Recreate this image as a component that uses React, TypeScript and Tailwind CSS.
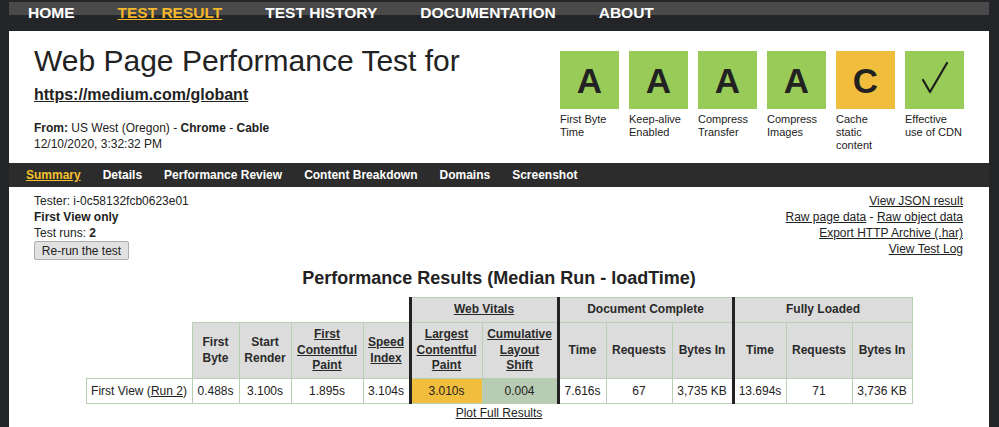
import React from "react";

const TOP_NAV = ["HOME", "TEST RESULT", "TEST HISTORY", "DOCUMENTATION", "ABOUT"];
const SUB_NAV = ["Summary", "Details", "Performance Review", "Content Breakdown", "Domains", "Screenshot"];

const GRADES = [
  { grade: "A", label: ["First Byte", "Time"], color: "bg-[#99cb59]" },
  { grade: "A", label: ["Keep-alive", "Enabled"], color: "bg-[#99cb59]" },
  { grade: "A", label: ["Compress", "Transfer"], color: "bg-[#99cb59]" },
  { grade: "A", label: ["Compress", "Images"], color: "bg-[#99cb59]" },
  { grade: "C", label: ["Cache", "static", "content"], color: "bg-[#f1bd3c]" },
  { grade: "check", label: ["Effective", "use of CDN"], color: "bg-[#99cb59]" },
];

function CheckMark() {
  return (
    <svg width="59" height="58" viewBox="0 0 59 58">
      <path d="M18 29 L25 41 L42 12" fill="none" stroke="#1e1e1e" strokeWidth="2.2" strokeLinecap="round" strokeLinejoin="round" />
    </svg>
  );
}

function GradeBox({ grade, label, color }: { grade: string; label: string[]; color: string }) {
  return (
    <div className="w-[59px]">
      <div className={`flex h-[58px] w-[59px] items-center justify-center ${color}`}>
        {grade === "check" ? (
          <CheckMark />
        ) : (
          <span className="text-[35px] font-bold leading-none text-[#222]">{grade}</span>
        )}
      </div>
      <div className="mt-[4px] text-[11px] leading-[13px] text-[#222]">
        {label.map((l) => (
          <div key={l}>{l}</div>
        ))}
      </div>
    </div>
  );
}

const th = "border border-[#b9cfb4] bg-[#dcdcdc] px-[3px] py-0 text-center text-[12px] font-bold leading-[15.5px] text-[#2a2a2a]";
const td = "border border-[#b9cfb4] px-[3px] py-0 text-center text-[12px] font-normal leading-[14px] text-[#222]";
const thick = "border-l-[3px] border-l-[#222]";

function ResultsTable() {
  return (
    <table className="mx-auto mt-[8px] table-fixed border-collapse">
      <colgroup>
        <col className="w-[106px]" />
        <col className="w-[47px]" />
        <col className="w-[52px]" />
        <col className="w-[72px]" />
        <col className="w-[47px]" />
        <col className="w-[72px]" />
        <col className="w-[76px]" />
        <col className="w-[48px]" />
        <col className="w-[66px]" />
        <col className="w-[61px]" />
        <col className="w-[53px]" />
        <col className="w-[66px]" />
        <col className="w-[60px]" />
      </colgroup>
      <thead>
        <tr className="h-[25px]">
          <th colSpan={5} className="border-0 p-0"></th>
          <th colSpan={2} className={`${th} ${thick}`}>
            <span className="underline">Web Vitals</span>
          </th>
          <th colSpan={3} className={`${th} ${thick}`}>Document Complete</th>
          <th colSpan={3} className={`${th} ${thick}`}>Fully Loaded</th>
        </tr>
        <tr className="h-[56px]">
          <th className="border-0 p-0"></th>
          <th className={th}>First<br />Byte</th>
          <th className={th}>Start<br />Render</th>
          <th className={th}>
            <span className="underline">First<br />Contentful<br />Paint</span>
          </th>
          <th className={th}>
            <span className="underline">Speed<br />Index</span>
          </th>
          <th className={`${th} ${thick}`}>
            <span className="underline">Largest<br />Contentful<br />Paint</span>
          </th>
          <th className={th}>
            <span className="underline">Cumulative<br />Layout<br />Shift</span>
          </th>
          <th className={`${th} ${thick}`}>Time</th>
          <th className={th}>Requests</th>
          <th className={th}>Bytes In</th>
          <th className={`${th} ${thick}`}>Time</th>
          <th className={th}>Requests</th>
          <th className={th}>Bytes In</th>
        </tr>
      </thead>
      <tbody>
        <tr className="h-[25px]">
          <td className={td}>
            First View (<span className="underline">Run 2</span>)
          </td>
          <td className={td}>0.488s</td>
          <td className={td}>3.100s</td>
          <td className={td}>1.895s</td>
          <td className={td}>3.104s</td>
          <td className={`${td} ${thick} bg-[#f1bd3c]`}>3.010s</td>
          <td className={`${td} bg-[#b8cbb3]`}>0.004</td>
          <td className={`${td} ${thick}`}>7.616s</td>
          <td className={td}>67</td>
          <td className={td}>3,735 KB</td>
          <td className={`${td} ${thick}`}>13.694s</td>
          <td className={td}>71</td>
          <td className={td}>3,736 KB</td>
        </tr>
      </tbody>
    </table>
  );
}

export default function App() {
  return (
    <div className="min-h-[427px] bg-[#232529] pl-[9px] pr-[10px] font-['Liberation_Sans',Arial,sans-serif] text-[#222]">
      {/* top navigation */}
      <div className="h-[31px] pt-[2px]">
        <div className="flex h-[29px] gap-[43px] bg-[linear-gradient(to_bottom,#4a4a4a_13px,transparent_13px)] pl-[19px] pt-[2px] text-[15.5px] font-bold leading-[18px] text-white">
          {TOP_NAV.map((item) => (
            <span
              key={item}
              className={item === "TEST RESULT" ? "text-[#f3b72b] underline decoration-[#f3b72b]" : ""}
            >
              {item}
            </span>
          ))}
        </div>
      </div>

      <div className="min-h-[396px] bg-white">
        {/* header */}
        <div className="flex justify-between px-[25px] pb-[11px] pt-[13px]">
          <div>
            <h1 className="text-[30px] font-normal leading-[34px] text-[#222]">Web Page Performance Test for</h1>
            <div className="mt-[8px] text-[16px] font-bold leading-[18px] underline">https://medium.com/globant</div>
            <div className="mt-[16px] text-[12px] leading-[16px]">
              <div>
                <b>From:</b> US West (Oregon) - <b>Chrome</b> - <b>Cable</b>
              </div>
              <div>12/10/2020, 3:32:32 PM</div>
            </div>
          </div>
          <div className="mt-[7px] flex gap-[10px]">
            {GRADES.map((g, i) => (
              <GradeBox key={i} grade={g.grade} label={g.label} color={g.color} />
            ))}
          </div>
        </div>

        {/* sub navigation */}
        <div className="flex h-[24px] gap-[22px] bg-[#2c2c2c] pl-[17px] text-[12px] font-bold leading-[24px] text-white">
          {SUB_NAV.map((item) => (
            <span key={item} className={item === "Summary" ? "text-[#f5c12e] underline" : ""}>
              {item}
            </span>
          ))}
        </div>

        {/* test info */}
        <div className="flex justify-between pl-[25px] pr-[26px] pt-[6px] text-[12px] leading-[16px]">
          <div>
            <div>Tester: i-0c58132fcb0623e01</div>
            <div className="font-bold">First View only</div>
            <div>
              Test runs: <b>2</b>
            </div>
            <button className="h-[19px] w-[95px] rounded-[2px] border border-[#adadad] bg-[#e1e1e1] text-[12px] leading-[16px] text-[#222]">
              Re-run the test
            </button>
          </div>
          <div className="text-right">
            <div className="underline">View JSON result</div>
            <div>
              <span className="underline">Raw page data</span> - <span className="underline">Raw object data</span>
            </div>
            <div className="underline">Export HTTP Archive (.har)</div>
            <div className="underline">View Test Log</div>
          </div>
        </div>

        <h2 className="mt-[8px] text-center text-[18px] font-bold leading-[21px] text-[#222]">
          Performance Results (Median Run - loadTime)
        </h2>

        <ResultsTable />

        <div className="mt-[2px] text-center text-[12px] leading-[14px] underline">Plot Full Results</div>
      </div>
    </div>
  );
}
